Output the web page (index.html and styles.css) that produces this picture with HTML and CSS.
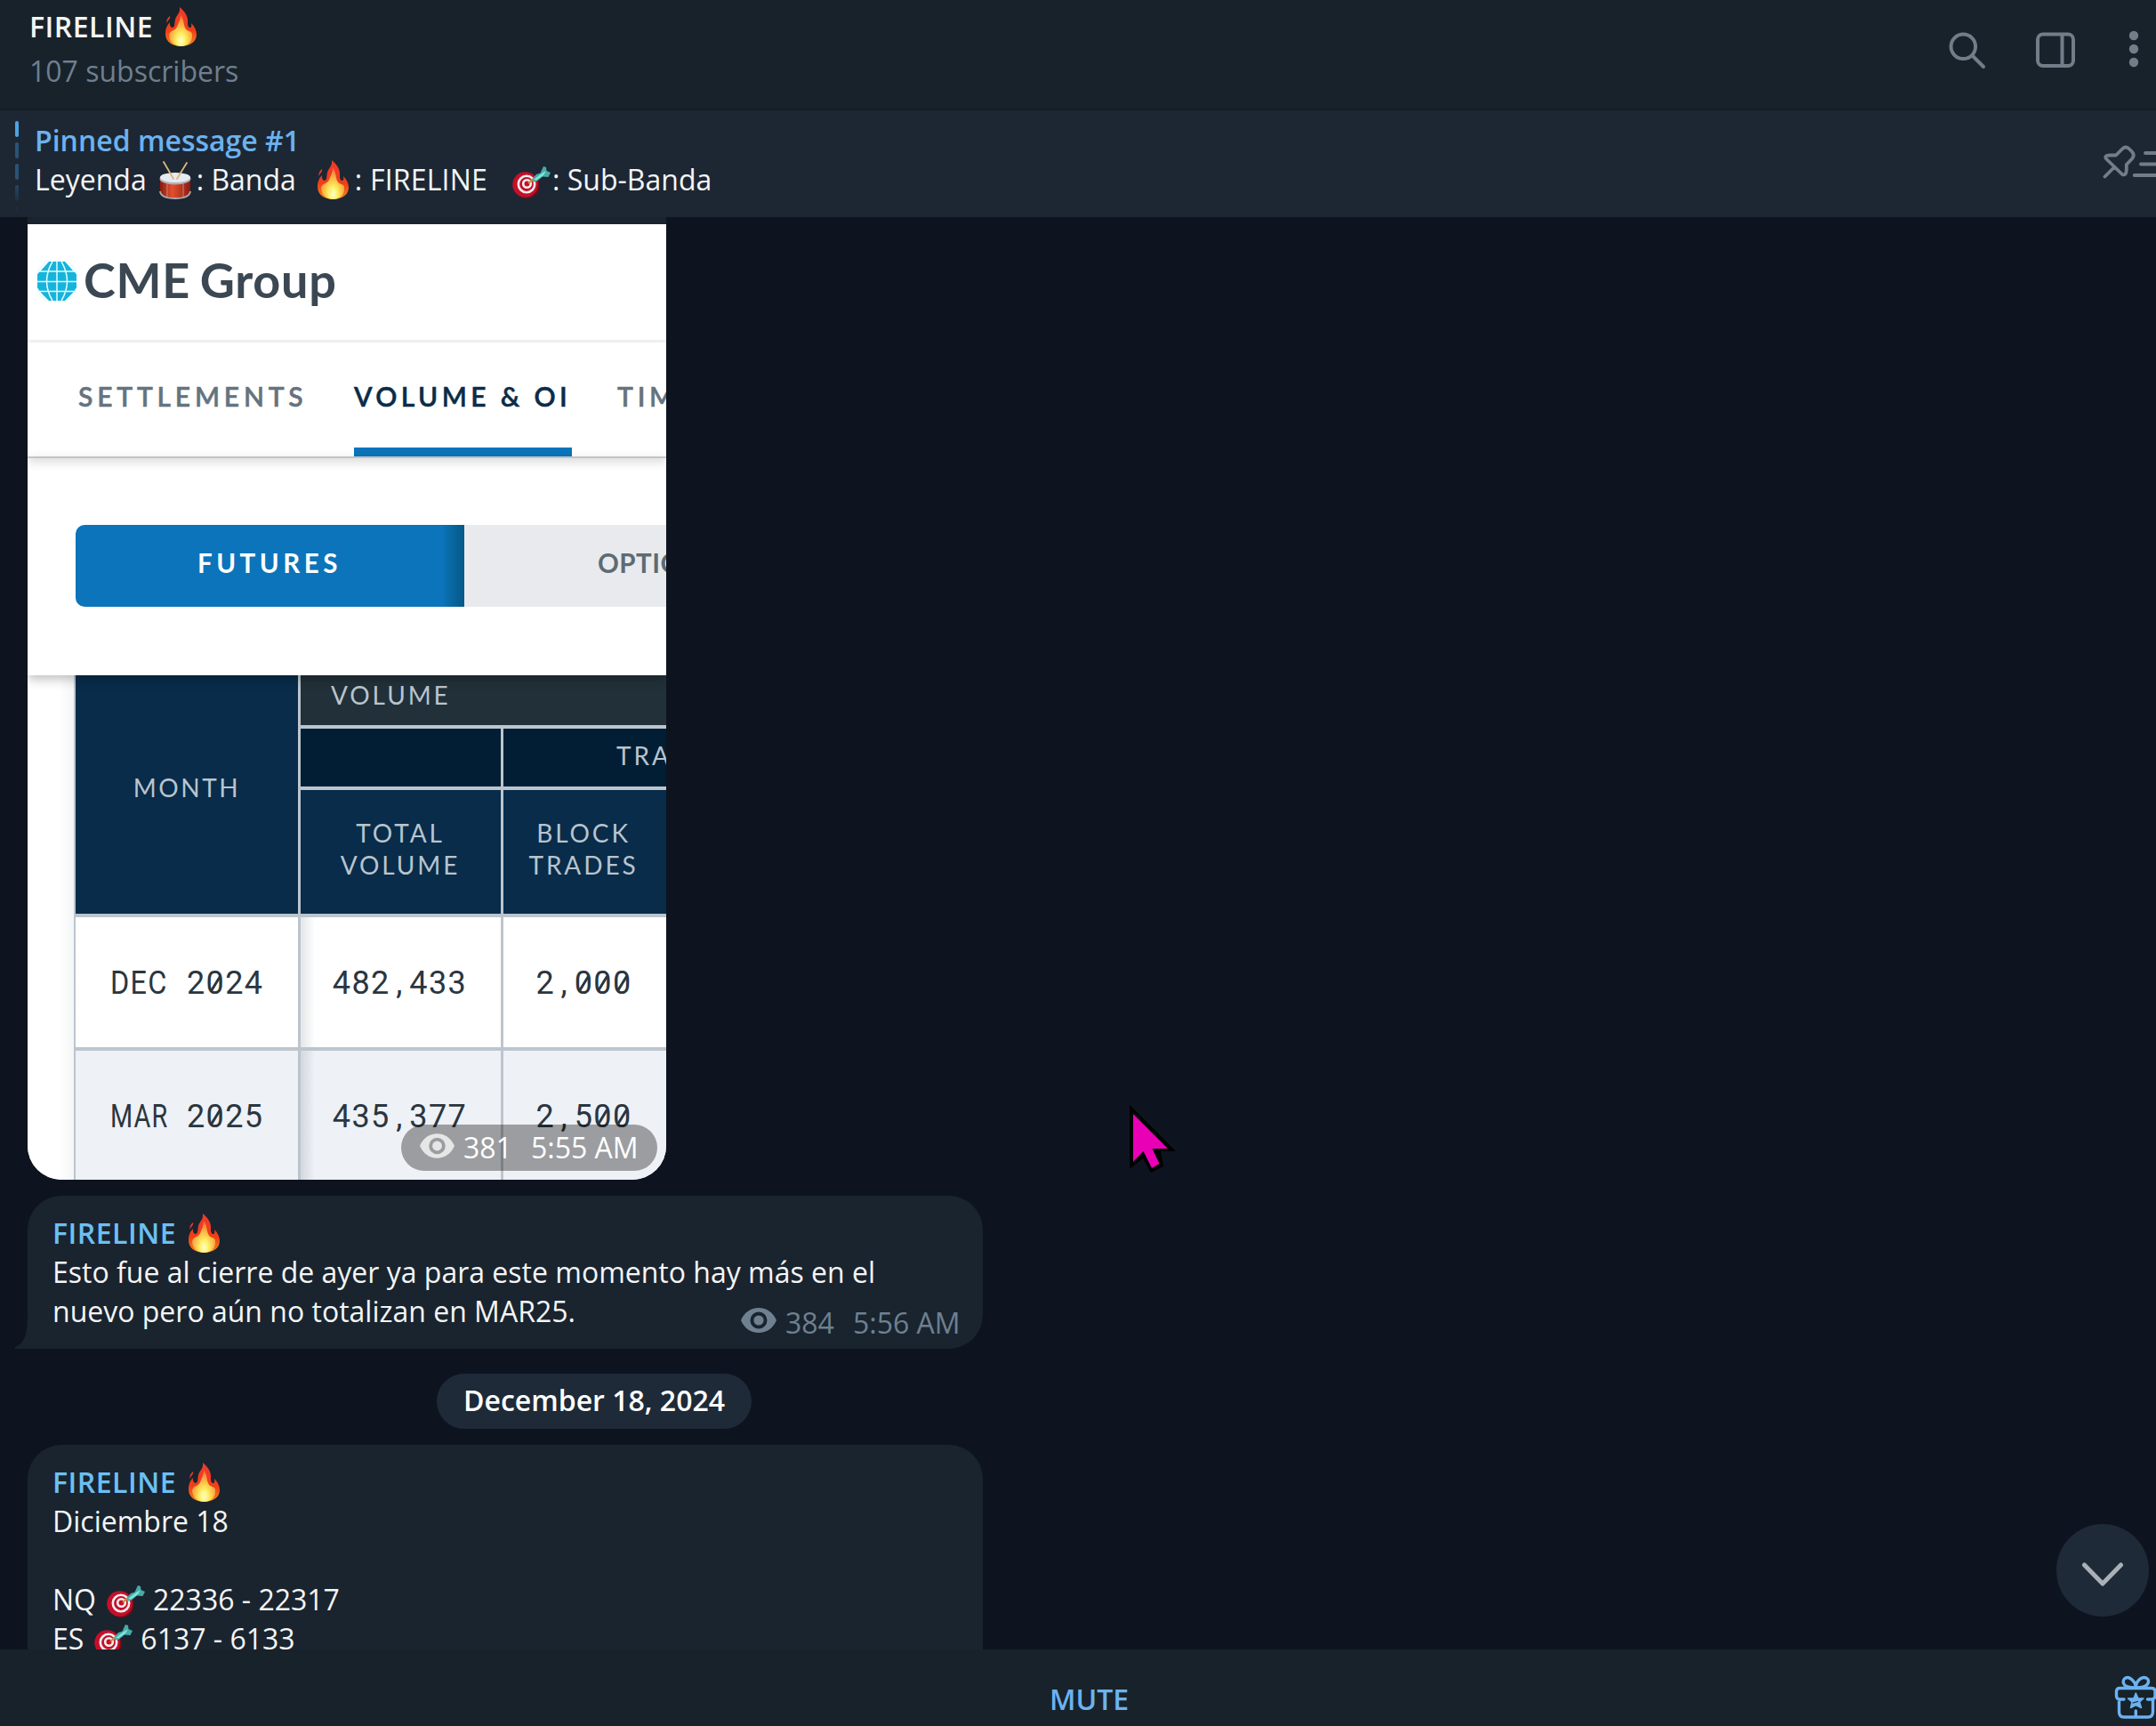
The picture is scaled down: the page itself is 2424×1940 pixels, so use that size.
FILE: index.html
```html
<!DOCTYPE html>
<html lang="es">
<head>
<meta charset="utf-8">
<title>FIRELINE</title>
<link rel="stylesheet" href="styles.css">
</head>
<body>
<svg class="defs" width="0" height="0" aria-hidden="true">
  <defs>
    <linearGradient id="flame" x1="0" y1="0" x2="0" y2="1">
      <stop offset="0" stop-color="#ee3a2c"/><stop offset=".6" stop-color="#ee3f18"/><stop offset="1" stop-color="#f5861c"/>
    </linearGradient>
    <radialGradient id="flame-core" gradientUnits="userSpaceOnUse" cx="17.500" cy="38" r="30" gradientTransform="translate(17.500 0) scale(.62 1) translate(-17.500 0)">
      <stop offset="0" stop-color="#fffdd0"/><stop offset=".25" stop-color="#fff26a"/><stop offset=".5" stop-color="#fbc84a"/><stop offset=".8" stop-color="#f68f3e"/><stop offset="1" stop-color="#f2583a"/>
    </radialGradient>
    <linearGradient id="drum-body" x1="0" y1="0" x2="1" y2="0">
      <stop offset="0" stop-color="#8c1a10"/><stop offset=".4" stop-color="#e2502f"/><stop offset="1" stop-color="#8c1a10"/>
    </linearGradient>
    <symbol id="fire" viewBox="0 0 35 44">
      <path fill="url(#flame)" d="M16 0C22 5 26 11 25 18C25 21 26 23 27.500 23C29.500 23 29.500 21 29 18C33 22 35 26 35 31C35 39 27 44 17.500 44C8 44 0 39 0 30C0 24 2 20 5 17C4.500 20 6 23 8 23C11 22 10 18 11 14C12 9 17 7 16 0ZM5 10C6 13 3 14 1.500 18C1 14 3 12 5 10Z"/>
      <path fill="url(#flame-core)" d="M17 8C21 14 20 18 22 23C24 28 29 26 30 30C31 39 25 44 17.500 44C10 44 4 39 4 31C6 25 11 27 13 22C15 17 17 14 17 8Z"/>
    </symbol>
    <symbol id="dart" viewBox="0 0 43 36">
      <circle cx="16" cy="21.500" r="14.500" fill="#7e0a19"/>
      <circle cx="14.500" cy="20.500" r="14.300" fill="#c4102a"/>
      <g fill="none" stroke="#f6eef0" stroke-width="2.600"><circle cx="16" cy="20" r="9.200"/><circle cx="16.500" cy="19.500" r="4.300"/></g>
      <path d="M18 19L24 14" stroke="#c9942c" stroke-width="2.200"/>
      <path fill="#48aba6" d="M22.500 14L27 9L31.500 7.500L35 0L38 1L38.500 5L43 7L40.500 12L34 11.500L28 16.500L23 18Z"/>
      <path fill="#7fe6dc" d="M24 15L33 8L38 5L35 10L27 15.500Z"/>
    </symbol>
    <symbol id="drum" viewBox="0 0 36 43">
      <path fill="url(#drum-body)" d="M1 19V34Q2 42 18 42Q34 42 35 34V19Z"/>
      <path d="M9 25V40M27 25V40" stroke="#b98a80" stroke-width="1"/>
      <path d="M1 34Q2 42 18 42Q34 42 35 34" fill="none" stroke="#a9a6a6" stroke-width="2"/>
      <ellipse cx="18" cy="20" rx="17.500" ry="6.500" fill="#b0b2b7"/><ellipse cx="18" cy="18.500" rx="17" ry="5.500" fill="#e6ebf2"/>
      <path d="M5 1L16 20M31 2L20 20" stroke="#d9b87c" stroke-width="1.800" stroke-linecap="round"/>
    </symbol>
    <symbol id="eye" viewBox="0 0 40 28">
      <path fill="currentColor" fill-rule="evenodd" d="M20 0C29 0 36 5 40 14C36 23 29 28 20 28C11 28 4 23 0 14C4 5 11 0 20 0ZM20 4.500A9.500 9.500 0 1 0 20 23.500A9.500 9.500 0 1 0 20 4.500Z"/>
      <circle cx="20" cy="14" r="5.600" fill="currentColor"/>
    </symbol>
  </defs>
</svg>
<div class="app">
  <header class="topbar">
    <div class="peer">
      <div class="peer-name">FIRELINE<svg class="fire"><use href="#fire"/></svg></div>
      <div class="peer-status">107 subscribers</div>
    </div>
    <svg class="tools" width="240" height="60" viewBox="2184 26 240 60" fill="none" stroke="#717d88" stroke-width="4" stroke-linecap="round">
      <circle cx="2207.300" cy="52.300" r="13.800"/><path d="M2217.500 62.500L2230 75"/>
      <rect x="2291" y="38.500" width="40" height="35.500" rx="6"/><path d="M2318.500 40V72" stroke-linecap="butt"/>
      <g fill="#717d88" stroke="none"><circle cx="2399" cy="40" r="5.200"/><circle cx="2399" cy="55" r="5.200"/><circle cx="2399" cy="70" r="5.200"/></g>
    </svg>
  </header>
  <section class="pinned">
    <div class="pin-marks"><i class="on"></i><i></i><i></i><i class="dim"></i><i class="last"></i></div>
    <div class="pin-body">
      <div class="pin-title">Pinned message #1</div>
      <div class="pin-text"><span>Leyenda</span><svg class="drum"><use href="#drum"/></svg><span>: Banda</span><svg class="fire"><use href="#fire"/></svg><span class="caps">: FIRELINE</span><svg class="dart"><use href="#dart"/></svg><span>: Sub-Banda</span></div>
    </div>
    <svg class="pin-icon" width="64" height="44" viewBox="0 0 64 44" fill="none" stroke="#717d88" stroke-width="3.800" stroke-linecap="round" stroke-linejoin="round">
      <path d="M19 14.500L26.500 7Q30 3.500 34 7.500L37 10.500Q40.500 14.500 37 18.500L30.800 25V31Q30.500 38 26 36L8 18.500Q5.500 14.500 12 14.500ZM16.500 28.500L6.500 38.500M52 12H70M47 24.500H70M39.700 37H70"/>
    </svg>
  </section>

  <main class="chat">
    <article class="photo-message">
      <div class="photo">
        <div class="cme-brand">
          <svg class="globe" viewBox="0 0 44 44"><path fill="#14b5dc" d="M13 0H31L39 9L44 14V30L39 36L31 44H13L5 36L0 30V14L5 9Z"/><path d="M0 11H44M0 22.500H44M0 33.500H44M22 0V44M17 0Q4 22 17 44M27 0Q40 22 27 44M10 0Q-1 10 0 14M34 0Q45 10 44 14M0 30Q2 38 10 44M44 30Q42 38 34 44" fill="none" stroke="#e6fbff" stroke-width="1.500"/></svg>
          <span>CME Group</span>
        </div>
        <nav class="cme-nav"><span>SETTLEMENTS</span><span class="active">VOLUME &amp; OI</span><span>TIME</span></nav>
        <div class="cme-switch"><div class="choice on">FUTURES</div><div class="choice off">OPTIONS</div></div>
        <div class="cme-table">
          <div class="cell month">MONTH</div>
          <div class="cell group">VOLUME</div>
          <div class="cell deep"></div>
          <div class="cell deep trades">TRADES</div>
          <div class="cell col">TOTAL<br>VOLUME</div>
          <div class="cell col">BLOCK<br>TRADES</div>
          <div class="cell data"><em class="dec">DEC</em><b></b>2<u>0</u>24</div>
          <div class="cell data shade">482<s>,</s>433</div>
          <div class="cell data">2<s>,</s><u>0</u><u>0</u><u>0</u></div>
          <div class="cell data alt"><em class="mar">MAR</em><b></b>2<u>0</u>25</div>
          <div class="cell data alt shade">435<s>,</s>377</div>
          <div class="cell data alt">2<s>,</s>5<u>0</u><u>0</u></div>
        </div>
        <div class="badge"><svg class="eye"><use href="#eye"/></svg><span class="views">381</span><span>5:55 AM</span></div>
      </div>
    </article>

    <article class="bubble tailed">
      <svg class="tail" width="20" height="40" viewBox="0 0 20 40"><path fill="#19242f" d="M14 0C14 20 12 34 0 38V40H20V0Z"/></svg>
      <div class="author">FIRELINE<svg class="fire"><use href="#fire"/></svg></div>
      <p>Esto fue al cierre de ayer ya para este momento hay más en el<br>nuevo pero aún no totalizan en MAR25.</p>
      <div class="meta"><svg class="eye"><use href="#eye"/></svg><span class="views">384</span><span>5:56 AM</span></div>
    </article>

    <div class="date">December 18, 2024</div>

    <article class="bubble last">
      <div class="author">FIRELINE<svg class="fire"><use href="#fire"/></svg></div>
      <p>Diciembre 18<br><br>NQ<svg class="dart"><use href="#dart"/></svg>22336 - 22317<br>ES<svg class="dart"><use href="#dart"/></svg>6137 - 6133</p>
    </article>

    <div class="to-bottom"><svg width="104" height="104" viewBox="0 0 104 104"><path d="M31.500 46L52 67L72.500 46" fill="none" stroke="#a9b0b7" stroke-width="5" stroke-linecap="round" stroke-linejoin="round"/></svg></div>
    <svg class="pointer" width="56" height="80" viewBox="0 0 56 80"><path fill="#000" d="M0 0L52 52H35L38 69L24 76L15 60L0 72Z"/><path fill="#e900b6" d="M4 10L43 49H25.500L33.500 66L25 71L15.500 52L4 64Z"/></svg>
  </main>

  <footer class="bottombar">
    <span>MUTE</span>
    <svg class="gift" width="48" height="54" viewBox="0 0 48 54" fill="none" stroke="#6cb2f0" stroke-width="3.400" stroke-linecap="round" stroke-linejoin="round">
      <path d="M12 30H7Q3.500 30 3.500 26V21Q3.500 17.500 7 17.500H43Q47 17.500 47 21V26Q47 30 43 30H38.500M6.500 31V44Q6.500 50 12 50H39Q44.500 50 44.500 44V31M25.300 43V49M25.300 17C22 17 13 17 11.500 12C10 7 15 4 19 6.500C23 9 25.300 13 25.300 17C25.300 13 27 9 31 6.500C36 4 41 7 39 12C37 17 29 17 25.300 17"/>
      <path fill="#6cb2f0" stroke-width="1.500" d="M25.300 23L28 29H34L29.500 33L31.500 39.500L25.300 36.500L19.500 39.500L21 33L16.500 29H23Z"/><path stroke="#18222a" stroke-width="1.200" d="M22 34L27.500 32.500"/>
    </svg>
  </footer>
</div>
</body>
</html>
```
FILE: styles.css
```css
* { box-sizing: border-box; }
body { margin: 0; background: #0e141f; overflow: hidden; }
svg { display: block; flex: none; }
.defs { position: absolute; }
.app {
  width: 2424px; height: 1940px; display: flex; flex-direction: column; overflow: hidden;
  font: 32px/44px "Open Sans", sans-serif; color: #f5f5f5;
}
.fire { width: 35px; height: 44px; }
.dart { width: 43px; height: 36px; }
.drum { width: 36px; height: 43px; }
.eye { width: 40px; height: 28px; }

.topbar { height: 124px; background: #18222a; border-bottom: 2px solid #151e26; display: flex; justify-content: space-between; }
.peer { padding: 8px 0 0 33px; }
.peer-name { display: flex; font-weight: 600; letter-spacing: .500px; line-height: 43px; }
.peer-name .fire { margin-left: 14px; }
.peer-status { color: #6f7f8f; margin-top: 6px; }
.tools { margin-top: 26px; }

.pinned { height: 120px; background: #1c2733; display: flex; overflow: hidden; }
.pin-marks { width: 39px; padding: 12px 0 0 17px; display: flex; flex-direction: column; gap: 6px; }
.pin-marks i { width: 4px; height: 18px; border-radius: 2px; background: #2a5475; }
.pin-marks .on { background: #4da3e2; }
.pin-marks .dim { background: linear-gradient(#28455f, #1f303f); }
.pin-marks .last { height: 6px; background: #1e2b38; }
.pin-body { flex: 1; padding-top: 12px; }
.pin-title { color: #6cb2ef; font-weight: 600; }
.pin-text { display: flex; height: 44px; white-space: pre; }
.pin-text .drum { margin: 1px 6px 0 14px; }
.pin-text .fire { margin: 0 7px 0 24px; }
.pin-text .caps { letter-spacing: .200px; }
.pin-text .dart { margin: 7px 2px 0 28px; }
.pin-icon { margin-top: 36px; }

.chat { position: relative; height: 1610px; background: #0e141f; overflow: hidden; padding-left: 31px; }
.photo-message { width: 718px; padding-top: 8px; background: linear-gradient(#19242f 8px, transparent 8px); }
.photo { position: relative; height: 1074px; background: #fff; border-radius: 0 0 38px 38px; overflow: hidden; font-family: Lato, sans-serif; }
.cme-brand { height: 133px; display: flex; border-bottom: 3px solid #f2f2f3; color: #3b4853; font-size: 54px; font-weight: 700; line-height: 64px; letter-spacing: .700px; word-spacing: -3px; padding: 31px 0 0 11px; }
.globe { width: 44px; height: 44px; margin: 11px 8px 0 0; }
.cme-nav { position: relative; height: 130px; display: flex; border-bottom: 2px solid #cfd0d2; box-shadow: 0 5px 10px #0002; font-size: 30px; font-weight: 600; -webkit-text-stroke: .500px; letter-spacing: 4.800px; line-height: 36px; color: #65737e; white-space: nowrap; padding-left: 57px; }
.cme-nav span { padding-top: 42px; flex: none; }
.cme-nav span:first-child { width: 310px; }
.cme-nav .active { width: 245px; margin-right: 51px; color: #0a2c49; letter-spacing: 4.400px; border-bottom: 10px solid #0b74ba; }
.cme-switch { position: relative; height: 244px; padding: 75px 0 77px 54px; display: flex; font-size: 29.500px; font-weight: 700; line-height: 36px; box-shadow: 0 4px 12px #0004; }
.choice { padding-top: 25px; height: 92px; flex: none; }
.choice.on { width: 437px; padding-left: 137px; border-radius: 10px 0 0 10px; color: #fff; letter-spacing: 4.500px; background: linear-gradient(90deg, #0b74ba 412px, #066296 428px, #075789 437px); }
.choice.off { width: 240px; padding-left: 150px; color: #5d6b74; background: #e9eaed; letter-spacing: .500px; }
.cme-table {
  width: 720px; height: 567px; padding-left: 54px; display: grid;
  grid-template: 56px 65px 139px 146px 147px / 250px 225px 190px; gap: 4px 3px;
  background: linear-gradient(90deg, #fff 36px, #f4f5f6 52px, #bcc5ce 52px);
  font-size: 28px; line-height: 36px; letter-spacing: 2.900px; color: #b9c4ce;
  text-align: center;
}
.cell { background: #082c4a; overflow: hidden; }
.month { grid-row: 1 / 4; padding-top: 108px; letter-spacing: 2.600px; }
.group { grid-column: 2 / 4; background: #223039; text-align: left; padding: 4px 0 0 34px; }
.deep { background: #021e34; }
.trades { text-align: left; padding: 12px 0 0 127px; }
.col { padding-top: 30px; padding-right: 1px; }
.col:nth-child(6) { padding-right: 10px; }
.cell.data { background: #fff; color: #2a363f; font: 36px/48px Roboto, sans-serif; letter-spacing: 1.400px; padding: 50px 0 0; display: flex; justify-content: center; }
.cell.data:nth-child(3n) { padding-right: 9px; }
.cell.data.alt { background: #eef1f6; }
.cell.data.shade { padding-right: 2px; background: linear-gradient(90deg, #e3e5e7, #fff 16px); }
.cell.data.alt.shade { background: linear-gradient(90deg, #d3d8df, #eef1f6 16px); }
.data em { width: 64.800px; font-style: normal; transform-origin: 0 0; white-space: nowrap; }
.data .dec { transform: scaleX(.9); }
.data .mar { transform: scaleX(.8); }
.data b { width: 21.600px; }
.data s { width: 21.600px; text-decoration: none; text-align: center; }
.data u { position: relative; text-decoration: none; }
.data u::after { content: ""; position: absolute; left: 9px; top: 15px; width: 2.500px; height: 19px; background: currentColor; transform: rotate(32deg); }
.badge { position: absolute; right: 10px; bottom: 10px; width: 288px; height: 52px; border-radius: 26px; background: #00000059; color: #fff; font-family: "Open Sans", sans-serif; white-space: nowrap; display: flex; padding: 4px 0 0 21px; }
.badge .eye { width: 39px; margin: 6px 10px 0 0; color: #e6e6e7; }
.views { width: 76px; flex: none; }

.bubble { position: relative; width: 1074px; height: 172px; margin-top: 18px; padding: 20px 28px; border-radius: 38px; background: #19242f; }
.tailed { border-bottom-left-radius: 0; }
.tail { position: absolute; left: -14px; bottom: 0; }
.author { display: flex; color: #6cc0f2; font-weight: 600; letter-spacing: .500px; }
.author .fire { margin-left: 14px; }
.bubble p { margin: 0; white-space: nowrap; }
.bubble p .dart { display: inline-block; vertical-align: -8px; margin: 0 9px 0 12px; }
.meta { position: absolute; right: 23px; bottom: 7px; width: 249px; display: flex; white-space: nowrap; color: #6f8090; }
.meta .eye { margin: 5px 10px 0 0; }
.date { width: 354px; height: 62px; margin: 28px 0 0 460px; padding-top: 8px; border-radius: 31px; background: #1e2a38; color: #fff; font-weight: 600; text-align: center; }
.bubble.last { height: 300px; }
.to-bottom { position: absolute; left: 2312px; top: 1469px; width: 104px; height: 104px; border-radius: 50%; background: #1e2a37; }
.pointer { position: absolute; left: 1270px; top: 998px; }

.bottombar { position: relative; height: 86px; background: #18222a; color: #6cb2f0; font-weight: 600; display: flex; padding: 34px 0 0 1180px; }
.gift { margin: -8px 0 0 auto; }
```
